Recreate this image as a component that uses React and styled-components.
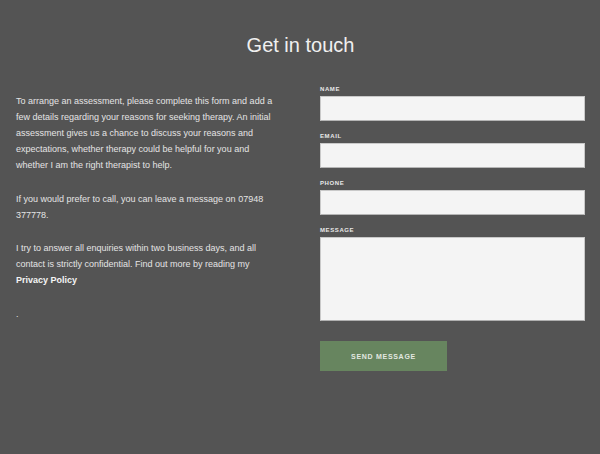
import React from "react";
import styled, { createGlobalStyle } from "styled-components";

const GlobalStyle = createGlobalStyle`
  html, body {
    margin: 0;
    padding: 0;
    background: #545454;
  }
  body {
    font-family: "Liberation Sans", Arial, sans-serif;
  }
`;

const Page = styled.div`
  width: 600px;
  min-height: 454px;
  box-sizing: border-box;
  padding: 33px 15px 0 16px;
  background: #545454;
`;

const Title = styled.h1`
  margin: 0 0 28px;
  text-align: center;
  font-size: 20px;
  font-weight: 400;
  line-height: 24px;
  color: #f0f0f0;
`;

const Columns = styled.div`
  display: grid;
  grid-template-columns: 266px 1fr;
  column-gap: 38px;
`;

const Intro = styled.div`
  padding-top: 8px;
  font-size: 9px;
  line-height: 16px;
  color: #e4e4e4;
`;

const Para = styled.p`
  margin: 0 0 17.5px;
`;

const Strong = styled.strong`
  font-weight: 700;
  color: #f4f4f4;
`;

const Form = styled.form`
  display: flex;
  flex-direction: column;
`;

const Field = styled.label`
  display: flex;
  flex-direction: column;
  margin-bottom: 11px;
`;

const Label = styled.span`
  font-size: 6px;
  font-weight: 700;
  letter-spacing: 0.1em;
  line-height: 8px;
  color: #e8e8e8;
  margin-bottom: 3px;
`;

const Input = styled.input`
  box-sizing: border-box;
  width: 265px;
  height: 25px;
  margin: 0;
  border: 1px solid #c9c9c9;
  border-bottom-color: #b5b5b5;
  background: #f4f4f4;
  outline: none;
`;

const TextArea = styled.textarea`
  box-sizing: border-box;
  display: block;
  width: 265px;
  height: 84px;
  margin: 0;
  border: 1px solid #c9c9c9;
  border-bottom-color: #b0b0b0;
  background: #f4f4f4;
  resize: none;
  outline: none;
`;

const Button = styled.button`
  width: 127px;
  height: 30px;
  margin-top: 9px;
  border: none;
  background: #67855f;
  color: #e3e8e1;
  font-family: "Liberation Sans", Arial, sans-serif;
  font-size: 7px;
  font-weight: 700;
  letter-spacing: 0.1em;
  cursor: pointer;
`;

const fields = ["NAME", "EMAIL", "PHONE"];

export default function App() {
  return (
    <Page>
      <GlobalStyle />
      <Title>Get in touch</Title>
      <Columns>
        <Intro>
          <Para>
            To arrange an assessment, please complete this form and add a few
            details regarding your reasons for seeking therapy. An initial
            assessment gives us a chance to discuss your reasons and
            expectations, whether therapy could be helpful for you and whether
            I am the right therapist to help.
          </Para>
          <Para>
            If you would prefer to call, you can leave a message on 07948
            377778.
          </Para>
          <Para>
            I try to answer all enquiries within two business days, and all
            contact is strictly confidential. Find out more by reading my{" "}
            <Strong>Privacy Policy</Strong>
          </Para>
          <Para>.</Para>
        </Intro>
        <Form onSubmit={(e) => e.preventDefault()}>
          {fields.map((f) => (
            <Field key={f}>
              <Label>{f}</Label>
              <Input type="text" />
            </Field>
          ))}
          <Field>
            <Label>MESSAGE</Label>
            <TextArea />
          </Field>
          <Button type="submit">SEND MESSAGE</Button>
        </Form>
      </Columns>
    </Page>
  );
}
